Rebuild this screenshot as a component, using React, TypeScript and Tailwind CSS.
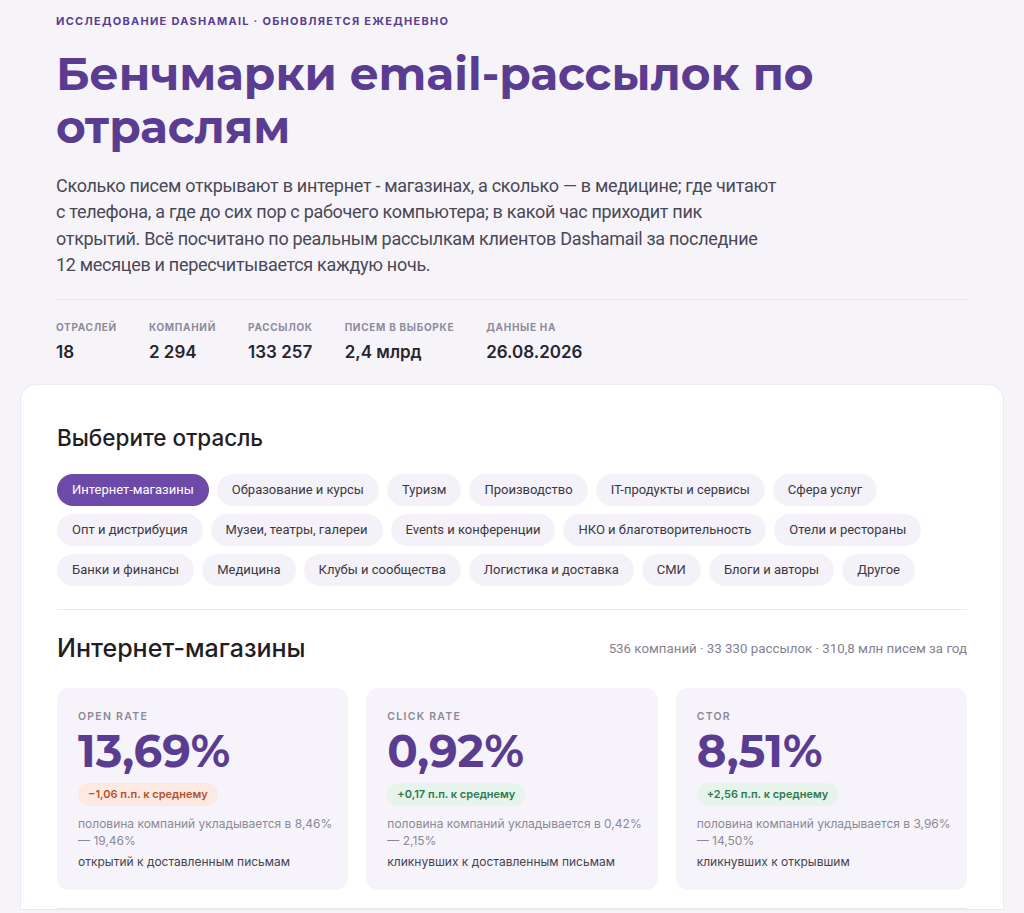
const INDUSTRIES = [
  "Интернет-магазины",
  "Образование и курсы",
  "Туризм",
  "Производство",
  "IT-продукты и сервисы",
  "Сфера услуг",
  "Опт и дистрибуция",
  "Музеи, театры, галереи",
  "Events и конференции",
  "НКО и благотворительность",
  "Отели и рестораны",
  "Банки и финансы",
  "Медицина",
  "Клубы и сообщества",
  "Логистика и доставка",
  "СМИ",
  "Блоги и авторы",
  "Другое",
];

const STATS = [
  { label: "Отраслей", value: "18" },
  { label: "Компаний", value: "2 294" },
  { label: "Рассылок", value: "133 257" },
  { label: "Писем в выборке", value: "2,4 млрд" },
  { label: "Данные на", value: "26.08.2026" },
];

type Metric = {
  label: string;
  value: string;
  delta: string;
  up: boolean;
  range: string;
  range2: string;
  note: string;
};

const METRICS: Metric[] = [
  {
    label: "Open rate",
    value: "13,69%",
    delta: "−1,06 п.п. к среднему",
    up: false,
    range: "половина компаний укладывается в 8,46%",
    range2: "— 19,46%",
    note: "открытий к доставленным письмам",
  },
  {
    label: "Click rate",
    value: "0,92%",
    delta: "+0,17 п.п. к среднему",
    up: true,
    range: "половина компаний укладывается в 0,42%",
    range2: "— 2,15%",
    note: "кликнувших к доставленным письмам",
  },
  {
    label: "CTOR",
    value: "8,51%",
    delta: "+2,56 п.п. к среднему",
    up: true,
    range: "половина компаний укладывается в 3,96%",
    range2: "— 14,50%",
    note: "кликнувших к открывшим",
  },
];

const display = "font-['Montserrat','DejaVu_Sans','Inter',sans-serif]";
const narrow = "font-['Roboto','Liberation_Sans',sans-serif]";
const inter = "font-['Inter','Noto_Sans',sans-serif]";

function MetricCard({ m }: { m: Metric }) {
  return (
    <div className="h-[202px] rounded-xl bg-[#f6f4fa] px-[21px] pt-[21px]">
      <div className={`${inter} text-[10.5px] font-semibold uppercase tracking-[0.12em] text-[#8b8997]`}>
        {m.label}
      </div>
      <div className={`${display} mt-[0px] text-[45px] leading-[52px] font-bold text-[#5a3d91]`}>{m.value}</div>
      <span
        className={`${inter} mt-[6px] inline-block rounded-full px-[10px] py-[3px] text-[11px] font-semibold ${
          m.up ? "bg-[#e7f4ec] text-[#2e7a50]" : "bg-[#fbe9e2] text-[#b4532c]"
        }`}
      >
        {m.delta}
      </span>
      <p className={`${inter} mt-[9px] text-[12px] leading-[17px] text-[#8b8997]`}>
        <span className="whitespace-nowrap">{m.range}</span>
        <br />
        {m.range2}
      </p>
      <p className={`${inter} mt-[4px] text-[12px] leading-[17px] text-[#45434f]`}>{m.note}</p>
    </div>
  );
}

export default function App() {
  return (
    <div className="min-h-[913px] bg-[#f6f4f9] text-[#222]">
      <header className="px-[56px] pt-[13px]">
        <div className={`${inter} text-[11px] font-bold uppercase tracking-[0.115em] text-[#5a3d91]`}>
          Исследование Dashamail · обновляется ежедневно
        </div>
        <h1 className={`${display} mt-[17px] text-[45.5px] leading-[53px] font-bold text-[#5a3d91]`}>
          Бенчмарки email-рассылок по
          <br />
          отраслям
        </h1>
        <p className={`${narrow} mt-[20px] text-[18px] leading-[26.5px] tracking-[-0.3px] text-[#4a4856]`}>
          Сколько писем открывают в интернет - магазинах, а сколько — в медицине; где читают
          <br />
          с телефона, а где до сих пор с рабочего компьютера; в какой час приходит пик
          <br />
          открытий. Всё посчитано по реальным рассылкам клиентов Dashamail за последние
          <br />
          12 месяцев и пересчитывается каждую ночь.
        </p>
        <div className="mt-[20px] border-t border-[#e6e3ec] pt-[20px] pb-[19px]">
          <div className="flex">
            {STATS.map((s, i) => (
              <div key={s.label} className={i === 4 ? "" : "mr-[32px]"}>
                <div className={`${inter} text-[10px] font-bold uppercase tracking-[0.07em] text-[#8d8b99]`}>
                  {s.label}
                </div>
                <div className={`${inter} mt-[5px] text-[17px] font-semibold text-[#26252d]`}>{s.value}</div>
              </div>
            ))}
          </div>
        </div>
      </header>

      <main className="mx-[20px] rounded-t-2xl border border-[#ebe8f0] bg-white px-[36px] pt-[36px]">
        <h2 className={`${inter} text-[22.5px] font-medium text-[#1f1e25]`}>Выберите отрасль</h2>
        <div className="mt-[19px] flex flex-wrap gap-x-[8px] gap-y-[8px]">
          {INDUSTRIES.map((name, i) => (
            <button
              key={name}
              className={`${narrow} h-[32px] rounded-full px-[15px] text-[13px] ${
                i === 0 ? "bg-[#6e4aa8] text-white" : "bg-[#f4f2f8] text-[#3a3843]"
              }`}
            >
              {name}
            </button>
          ))}
        </div>

        <div className="mt-[23px] border-t border-[#e9e6ee] pt-[20px]">
          <div className="flex items-center justify-between">
            <h3 className={`${inter} text-[25px] font-medium text-[#1f1e25]`}>Интернет-магазины</h3>
            <span className={`${narrow} text-[13.3px] text-[#84828f]`}>
              536 компаний · 33 330 рассылок · 310,8 млн писем за год
            </span>
          </div>
          <div className="mt-[21px] grid grid-cols-3 gap-[18px]">
            {METRICS.map((m) => (
              <MetricCard key={m.label} m={m} />
            ))}
          </div>
          <div className="mt-[18px] border-t border-[#e9e6ee]" />
        </div>
      </main>
    </div>
  );
}
